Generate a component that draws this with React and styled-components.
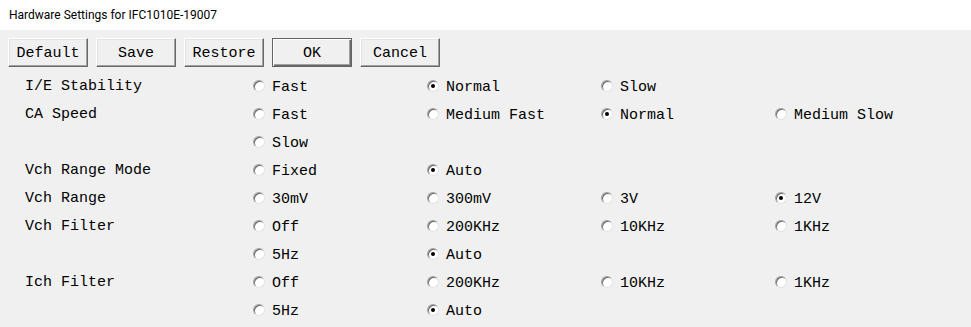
import React from 'react'
import styled, {createGlobalStyle} from 'styled-components'

const GlobalStyle = createGlobalStyle`
    html, body {
        margin: 0;
        padding: 0;
        background: #f0f0f0;
    }
`

const settings = [
    {label: 'I/E Stability', options: ['Fast', 'Normal', 'Slow'], selected: 'Normal'},
    {label: 'CA Speed', options: ['Fast', 'Medium Fast', 'Normal', 'Medium Slow', 'Slow'], selected: 'Normal'},
    {label: 'Vch Range Mode', options: ['Fixed', 'Auto'], selected: 'Auto'},
    {label: 'Vch Range', options: ['30mV', '300mV', '3V', '12V'], selected: '12V'},
    {label: 'Vch Filter', options: ['Off', '200KHz', '10KHz', '1KHz', '5Hz', 'Auto'], selected: 'Auto'},
    {label: 'Ich Filter', options: ['Off', '200KHz', '10KHz', '1KHz', '5Hz', 'Auto'], selected: 'Auto'},
]

const buttons = ['Default', 'Save', 'Restore', 'OK', 'Cancel']

const App = () => {
    return (
        <Window>
            <GlobalStyle/>
            <TitleBar>Hardware Settings for IFC1010E-19007</TitleBar>
            <Body>
                <ButtonBar>
                    {buttons.map(name => (
                        <Button key={name} $isDefault={name === 'OK'}>{name}</Button>
                    ))}
                </ButtonBar>
                <SettingsList>
                    {settings.map(setting => (
                        <SettingRow key={setting.label}>
                            <Label>{setting.label}</Label>
                            <Options>
                                {setting.options.map(option => (
                                    <Option key={option}>
                                        <Radio $checked={option === setting.selected}/>
                                        {option}
                                    </Option>
                                ))}
                            </Options>
                        </SettingRow>
                    ))}
                </SettingsList>
            </Body>
        </Window>
    )
}

const Window = styled.div`
    width: 971px;
    height: 327px;
    display: flex;
    flex-direction: column;
    font-family: 'Liberation Mono', 'Courier New', monospace;
    font-size: 15px;
    color: #000;
`

const TitleBar = styled.div`
    height: 30px;
    line-height: 30px;
    padding-left: 9px;
    background: #fff;
    font-family: Roboto, 'Liberation Sans', Arial, sans-serif;
    font-size: 12px;
    color: #000;
`

const Body = styled.div`
    flex: 1;
    background: #f0f0f0;
    padding: 8px 8px 0;
`

const ButtonBar = styled.div`
    display: flex;
    gap: 8px;
`

const Button = styled.button`
    box-sizing: border-box;
    width: 80px;
    height: 29px;
    padding: 2px 0 0;
    background: #f0f0f0;
    font-family: 'Liberation Mono', 'Courier New', monospace;
    font-size: 15px;
    color: #000;
    border: 1px solid;
    border-color: ${props => props.$isDefault ? '#646464' : '#fff #696969 #696969 #fff'};
    box-shadow: ${props => props.$isDefault
        ? 'inset 1px 1px #fff, inset -1px -1px #696969, inset -2px -2px #a0a0a0'
        : 'inset -1px -1px #a0a0a0, inset 1px 1px #e3e3e3'};
`

const SettingsList = styled.div`
    margin-top: 6px;
    padding-left: 17px;
`

const SettingRow = styled.div`
    display: flex;
`

const Label = styled.div`
    width: 228px;
    height: 28px;
    line-height: 28px;
    white-space: pre;
`

const Options = styled.div`
    display: grid;
    grid-template-columns: repeat(4, 174px);
    grid-auto-rows: 28px;
`

const Option = styled.div`
    display: flex;
    align-items: center;
    gap: 7px;
    white-space: pre;
`

const Radio = styled.span`
    box-sizing: border-box;
    width: 12px;
    height: 12px;
    border-radius: 50%;
    background: #fff;
    border: 1px solid;
    border-color: #a0a0a0 #e3e3e3 #e3e3e3 #a0a0a0;
    box-shadow: inset 1px 1px #696969;
    display: flex;
    align-items: center;
    justify-content: center;
    margin-top: -3px;
    &::after {
        content: "";
        width: 4px;
        height: 4px;
        border-radius: 50%;
        background: #000;
        display: ${props => props.$checked ? 'block' : 'none'};
    }
`

export default App
